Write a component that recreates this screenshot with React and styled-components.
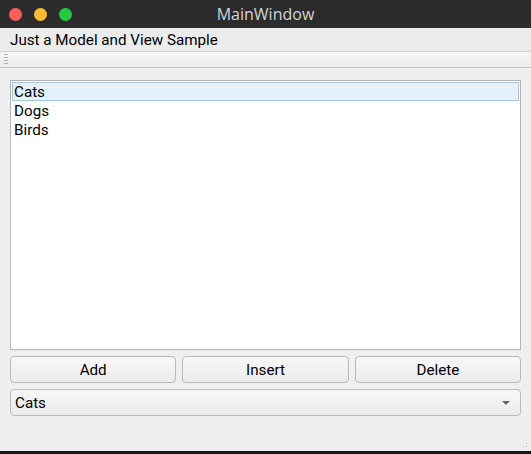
import React, { useState } from 'react';
import styled, { createGlobalStyle } from 'styled-components';

const GlobalStyle = createGlobalStyle`
  html, body {
    margin: 0;
    padding: 0;
    background: #1a1a1a;
  }
  * { box-sizing: border-box; }
`;

const Window = styled.div`
  width: 531px;
  height: 454px;
  display: flex;
  flex-direction: column;
  background: #efefef;
  font-family: 'Roboto', 'Noto Sans', sans-serif;
  color: #000;
  overflow: hidden;
`;

const TitleBar = styled.div`
  height: 28px;
  flex-shrink: 0;
  display: grid;
  grid-template-columns: 1fr auto 1fr;
  align-items: center;
  padding: 0 8px;
  background: #2c2c2c;
`;

const Lights = styled.div`
  display: flex;
  gap: 12px;
  padding-left: 1px;
`;

const Light = styled.span`
  width: 13px;
  height: 13px;
  border-radius: 50%;
  background: ${p => p.color};
`;

const Title = styled.div`
  color: #d4d4d4;
  font-family: 'Open Sans', 'Noto Sans', sans-serif;
  font-size: 16px;
`;

const MenuBar = styled.div`
  height: 23px;
  flex-shrink: 0;
  display: flex;
  align-items: center;
  padding: 0 10px;
  background: #ececec;
  font-size: 15.2px;
`;

const ToolBar = styled.div`
  height: 17px;
  flex-shrink: 0;
  display: flex;
  align-items: center;
  padding-left: 4px;
  border-top: 1px solid #cfcfcf;
  border-bottom: 1px solid #c2c2c2;
  background: linear-gradient(#f6f6f6, #ececec);
`;

const Grip = styled.div`
  width: 4px;
  height: 13px;
  background-image: radial-gradient(circle, #b0b0b0 0.7px, transparent 0.8px);
  background-size: 2px 3px;
`;

const Central = styled.div`
  flex: 1;
  display: flex;
  flex-direction: column;
  gap: 6px;
  padding: 12px 10px 0 10px;
`;

const ListView = styled.div`
  height: 270px;
  background: #fff;
  border: 1px solid #b4b4b4;
  padding: 1px;
`;

const Item = styled.div`
  height: 19px;
  line-height: 18px;
  padding-left: 1px;
  font-size: 15.2px;
  background: ${p => (p.selected ? '#e5f1fa' : 'transparent')};
  border: 1px solid ${p => (p.selected ? '#a9c7dc' : 'transparent')};
  cursor: default;
`;

const ButtonRow = styled.div`
  display: grid;
  grid-template-columns: repeat(3, 1fr);
  gap: 6px;
`;

const Button = styled.button`
  height: 27px;
  border: 1px solid #b9b9b9;
  border-radius: 4px;
  background: linear-gradient(#f7f7f7, #ececec);
  font-family: inherit;
  font-size: 15.2px;
  color: #000;
  padding: 0;
`;

const Combo = styled.div`
  height: 27px;
  display: flex;
  align-items: center;
  justify-content: space-between;
  padding: 0 10px 0 4px;
  border: 1px solid #b9b9b9;
  border-radius: 4px;
  background: linear-gradient(#f7f7f7, #ececec);
  font-size: 15.2px;
`;

const Arrow = styled.span`
  width: 0;
  height: 0;
  border-left: 4px solid transparent;
  border-right: 4px solid transparent;
  border-top: 4px solid #666;
`;

const StatusBar = styled.div`
  height: 35px;
  flex-shrink: 0;
  display: flex;
  justify-content: flex-end;
  align-items: flex-end;
  padding: 0 2px 2px 0;
`;

const SizeGrip = styled.div`
  width: 10px;
  height: 10px;
  background-image: radial-gradient(circle, #b8b8b8 0.7px, transparent 0.8px);
  background-size: 3px 3px;
  clip-path: polygon(100% 0, 100% 100%, 0 100%);
`;

const BottomEdge = styled.div`
  height: 3px;
  flex-shrink: 0;
  background: #161616;
`;

const App = () => {
  const [items] = useState(['Cats', 'Dogs', 'Birds']);
  const [selected, setSelected] = useState(0);

  return (
    <Window>
      <GlobalStyle />
      <TitleBar>
        <Lights>
          <Light color="#ff5f57" />
          <Light color="#febc2e" />
          <Light color="#28c840" />
        </Lights>
        <Title>MainWindow</Title>
        <div />
      </TitleBar>
      <MenuBar>Just a Model and View Sample</MenuBar>
      <ToolBar>
        <Grip />
      </ToolBar>
      <Central>
        <ListView>
          {items.map((item, i) => (
            <Item key={item} selected={i === selected} onClick={() => setSelected(i)}>
              {item}
            </Item>
          ))}
        </ListView>
        <ButtonRow>
          <Button>Add</Button>
          <Button>Insert</Button>
          <Button>Delete</Button>
        </ButtonRow>
        <Combo>
          <span>{items[selected]}</span>
          <Arrow />
        </Combo>
      </Central>
      <StatusBar>
        <SizeGrip />
      </StatusBar>
      <BottomEdge />
    </Window>
  );
};

export default App;
